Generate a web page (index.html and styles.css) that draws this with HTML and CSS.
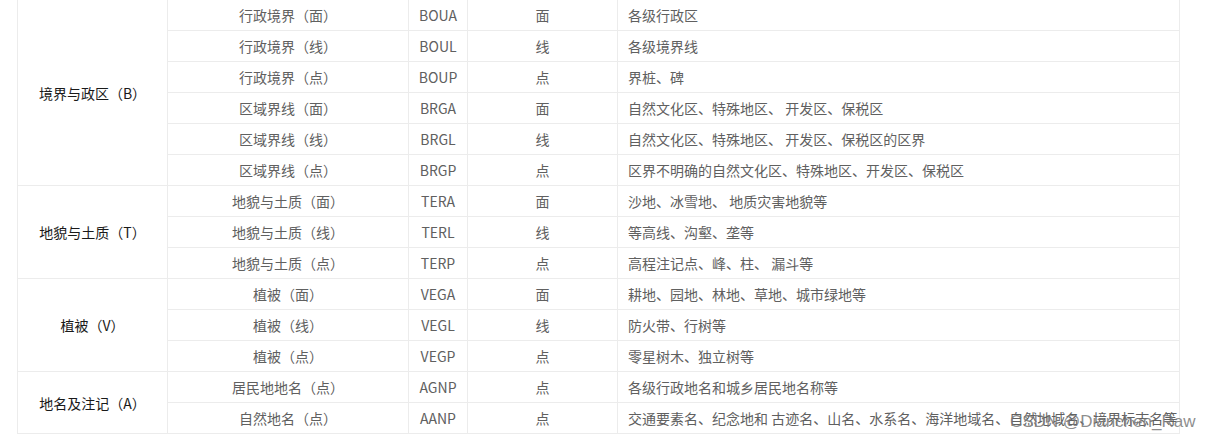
FILE: index.html
```html
<!DOCTYPE html>
<html lang="zh-CN">
<head>
<meta charset="utf-8">
<title>要素分类表</title>
<link rel="stylesheet" href="styles.css">
</head>
<body>
<div class="page">
  <table class="data">
    <colgroup>
      <col class="c1"><col class="c2"><col class="c3"><col class="c4"><col class="c5">
    </colgroup>
    <tbody>
      <tr><td class="cat" rowspan="6">境界与政区（B）</td><td>行政境界（面）</td><td>BOUA</td><td>面</td><td class="desc">各级行政区</td></tr>
      <tr><td>行政境界（线）</td><td>BOUL</td><td>线</td><td class="desc">各级境界线</td></tr>
      <tr><td>行政境界（点）</td><td>BOUP</td><td>点</td><td class="desc">界桩、碑</td></tr>
      <tr><td>区域界线（面）</td><td>BRGA</td><td>面</td><td class="desc">自然文化区、特殊地区、 开发区、保税区</td></tr>
      <tr><td>区域界线（线）</td><td>BRGL</td><td>线</td><td class="desc">自然文化区、特殊地区、 开发区、保税区的区界</td></tr>
      <tr><td>区域界线（点）</td><td>BRGP</td><td>点</td><td class="desc">区界不明确的自然文化区、特殊地区、开发区、保税区</td></tr>
      <tr><td class="cat" rowspan="3">地貌与土质（T）</td><td>地貌与土质（面）</td><td>TERA</td><td>面</td><td class="desc">沙地、冰雪地、 地质灾害地貌等</td></tr>
      <tr><td>地貌与土质（线）</td><td>TERL</td><td>线</td><td class="desc">等高线、沟壑、垄等</td></tr>
      <tr><td>地貌与土质（点）</td><td>TERP</td><td>点</td><td class="desc">高程注记点、峰、柱、 漏斗等</td></tr>
      <tr><td class="cat" rowspan="3">植被（V）</td><td>植被（面）</td><td>VEGA</td><td>面</td><td class="desc">耕地、园地、林地、草地、城市绿地等</td></tr>
      <tr><td>植被（线）</td><td>VEGL</td><td>线</td><td class="desc">防火带、行树等</td></tr>
      <tr><td>植被（点）</td><td>VEGP</td><td>点</td><td class="desc">零星树木、独立树等</td></tr>
      <tr><td class="cat" rowspan="2">地名及注记（A）</td><td>居民地地名（点）</td><td>AGNP</td><td>点</td><td class="desc">各级行政地名和城乡居民地名称等</td></tr>
      <tr><td>自然地名（点）</td><td>AANP</td><td>点</td><td class="desc">交通要素名、纪念地和 古迹名、山名、水系名、海洋地域名、自然地域名、境界标志名等</td></tr>
    </tbody>
  </table>
  <div class="watermark">CSDN @Dianchen_Raw</div>
</div>
</body>
</html>
```
FILE: styles.css
```css
html, body {
  margin: 0;
  padding: 0;
  background: #fff;
}
.page {
  position: relative;
  width: 1207px;
  height: 443px;
  overflow: hidden;
  padding-left: 17px;
  box-sizing: border-box;
  font-family: "Noto Sans CJK SC", "Microsoft YaHei", sans-serif;
}
.data {
  border-collapse: collapse;
  table-layout: fixed;
  width: 1163px;
  margin-top: -1px;
  font-size: 14px;
  color: #606060;
}
.c1 { width: 150px; }
.c2 { width: 241px; }
.c3 { width: 59px; }
.c4 { width: 150px; }
.c5 { width: 562px; }
.data td {
  border: 1px solid #ececec;
  height: 30px;
  padding: 0;
  text-align: center;
  vertical-align: middle;
  line-height: 20px;
  white-space: nowrap;
  overflow: visible;
}
.data td.cat {
  color: #1a1a1a;
}
.data td.desc {
  text-align: left;
  padding-left: 10px;
}
.watermark {
  position: absolute;
  left: 1010px;
  top: 412px;
  font-family: "Liberation Sans", Arial, sans-serif;
  font-size: 17px;
  color: rgba(120, 120, 120, 0.85);
  white-space: nowrap;
}
```
